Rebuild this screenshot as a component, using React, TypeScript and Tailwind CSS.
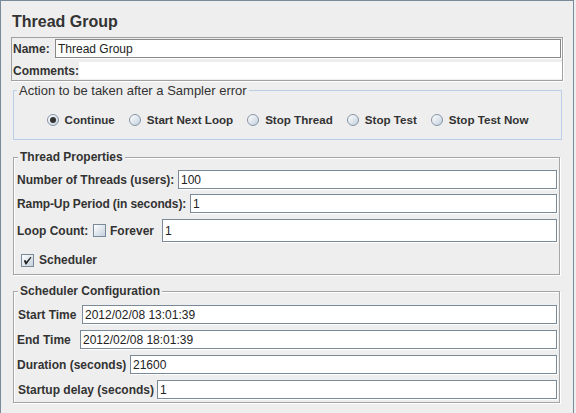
const txt = "font-['Liberation_Sans',Arial,sans-serif] text-[#333333]";

const Field = ({ value, className = "h-[19px]" }: { value: string; className?: string }) => (
  <div
    className={`flex min-w-0 flex-1 items-center border border-[#7a8a99] bg-white pl-[2px] text-[12px] font-normal text-[#222222] shadow-[1px_1px_0_#ffffff] ${className}`}
  >
    {value}
  </div>
);

const Radio = ({ label, checked }: { label: string; checked?: boolean }) => (
  <div className="flex items-center gap-[6px]">
    <span className="flex h-[12px] w-[12px] items-center justify-center rounded-full border border-[#8595a5] bg-linear-to-br from-white to-[#c3d0dd]">
      {checked && <span className="h-[6px] w-[6px] rounded-full bg-[#333333]" />}
    </span>
    <span className="text-[11.6px] font-bold">{label}</span>
  </div>
);

const Check = ({ checked }: { checked?: boolean }) => (
  <span className="flex h-[13px] w-[13px] shrink-0 items-center justify-center border border-[#7a8a99] bg-linear-to-br from-white to-[#c3d0dd]">
    {checked && (
      <svg width="9" height="9" viewBox="0 0 9 9">
        <path d="M0.8 4.6 L2.6 4 L3.3 5.8 L7.6 0.8 L8.4 1.6 L3.4 8.4 L2.4 8.4 Z" fill="#222222" />
      </svg>
    )}
  </span>
);

const Row = ({ label, width, value }: { label: string; width: string; value: string }) => (
  <div className="flex h-[19px] items-center">
    <span className={`shrink-0 text-[12px] font-bold ${width}`}>{label}</span>
    <Field value={value} />
  </div>
);

export default function App() {
  return (
    <div className={`min-h-screen bg-[#eeeeee] ${txt}`}>
      <div className="h-[413px] w-[574px] border-x border-t border-[#7a8a99] bg-[#eeeeee] pl-[10px]">
        <h1 className="pl-[1px] pt-[11px] text-[16px] font-bold leading-[20px]">Thread Group</h1>

        {/* Name / Comments */}
        <div className="mt-[5px] h-[44px] w-[552px] border border-[#a0a0a0] shadow-[1px_1px_0_#ffffff]">
          <div className="mt-[1px] flex h-[19px] items-center pl-[1px] pr-[1px]">
            <span className="w-[42px] shrink-0 text-[12px] font-bold">Name:</span>
            <Field value="Thread Group" className="h-[19px] border-[#888888]" />
          </div>
          <div className="mt-[4px] flex h-[17px] items-center pl-[1px]">
            <span className="w-[66px] shrink-0 text-[12px] font-bold">Comments:</span>
            <div className="h-full flex-1 bg-white" />
          </div>
        </div>

        {/* Action group */}
        <fieldset className="ml-[2px] mt-[2px] w-[549px] border border-[#b8cfe5] px-[3px] pb-[11px]">
          <legend className="px-[2px] text-[13px] leading-[15px]">Action to be taken after a Sampler error</legend>
          <div className="mt-[14px] flex h-[16px] items-center justify-center gap-[14px]">
            <Radio label="Continue" checked />
            <Radio label="Start Next Loop" />
            <Radio label="Stop Thread" />
            <Radio label="Stop Test" />
            <Radio label="Stop Test Now" />
          </div>
        </fieldset>

        {/* Thread Properties */}
        <fieldset className="ml-[2px] mt-[10px] w-[547px] border border-[#a5a5a5] pb-[6px] pl-[3px] pr-[2px] shadow-[inset_1px_1px_0_#ffffff,1px_1px_0_#ffffff]">
          <legend className="ml-[1px] bg-[#eeeeee] px-[2px] text-[12px] font-bold leading-[15px]">Thread Properties</legend>
          <div className="mt-[5px] flex flex-col">
            <Row label="Number of Threads (users):" width="w-[161px]" value="100" />
            <div className="mt-[5px]">
              <Row label="Ramp-Up Period (in seconds):" width="w-[173px] tracking-[-0.1px]" value="1" />
            </div>
            <div className="mt-[6px] flex h-[23px] items-center">
              <span className="w-[76px] shrink-0 text-[12px] font-bold">Loop Count:</span>
              <Check />
              <span className="ml-[4px] w-[52px] shrink-0 text-[12px] font-bold">Forever</span>
              <Field value="1" className="h-[23px]" />
            </div>
            <div className="mt-[10px] flex h-[16px] items-center gap-[5px] pl-[4px]">
              <Check checked />
              <span className="text-[12px] font-bold">Scheduler</span>
            </div>
          </div>
        </fieldset>

        {/* Scheduler Configuration */}
        <fieldset className="ml-[2px] mt-[9px] w-[547px] border border-[#a5a5a5] pb-[3px] pl-[3px] pr-[2px] shadow-[inset_1px_1px_0_#ffffff,1px_1px_0_#ffffff]">
          <legend className="ml-[1px] bg-[#eeeeee] px-[2px] text-[12px] font-bold leading-[15px]">Scheduler Configuration</legend>
          <div className="mt-[6px] flex flex-col gap-[6px]">
            <Row label="Start Time" width="w-[65px] pl-[1px]" value="2012/02/08 13:01:39" />
            <Row label="End Time" width="w-[63px]" value="2012/02/08 18:01:39" />
            <Row label="Duration (seconds)" width="w-[113px]" value="21600" />
            <Row label="Startup delay (seconds)" width="w-[140px] pl-[1px]" value="1" />
          </div>
        </fieldset>
      </div>
    </div>
  );
}
